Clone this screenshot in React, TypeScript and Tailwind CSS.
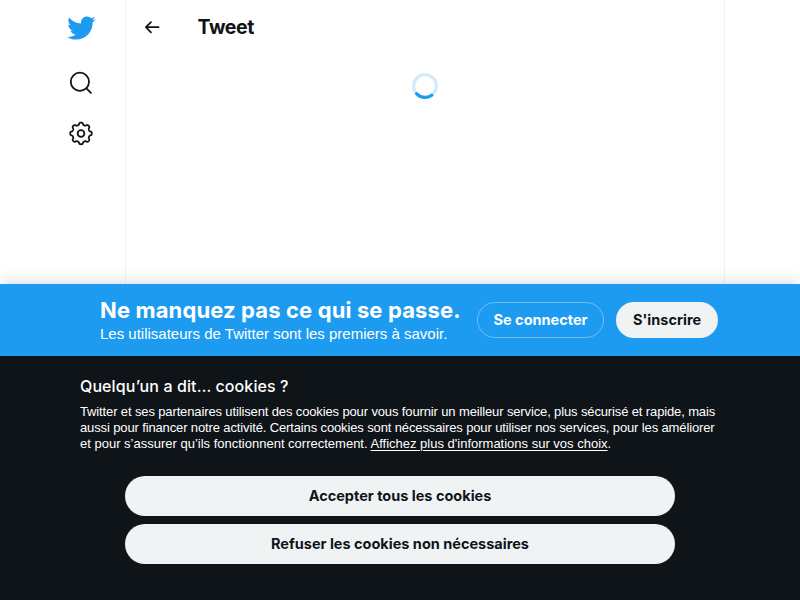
import React from "react";

const ink = "#0f1419";

function gearPath() {
  const points: string[] = [];
  for (let i = 0; i <= 144; i++) {
    const t = (i / 144) * Math.PI * 2;
    const wave = Math.cos(8 * t);
    const r = 9.0 + 1.0 * Math.tanh(1.7 * wave) / Math.tanh(1.7);
    points.push(`${(12 + r * Math.sin(t)).toFixed(2)} ${(12 - r * Math.cos(t)).toFixed(2)}`);
  }
  return `M${points.join("L")}Z`;
}

export default function App() {
  return (
    <div className="flex h-[600px] w-[800px] flex-col overflow-hidden bg-white font-['Inter','Liberation_Sans',sans-serif] text-[#0f1419]">
      <div className="flex h-[284px] shrink-0">
        <nav className="flex w-[125px] flex-col items-end pt-[13px] pr-[29px]">
          <svg viewBox="0 0 24 24" preserveAspectRatio="none" className="h-[30px] w-[30px]" fill="#1d9bf0">
            <path d="M23.643 4.937c-.835.37-1.732.62-2.675.733.962-.576 1.7-1.49 2.048-2.578-.9.534-1.897.922-2.958 1.13-.85-.904-2.06-1.47-3.4-1.47-2.572 0-4.658 2.086-4.658 4.66 0 .364.042.718.12 1.06-3.873-.195-7.304-2.05-9.602-4.868-.4.69-.63 1.49-.63 2.342 0 1.616.823 3.043 2.072 3.878-.764-.025-1.482-.234-2.11-.583v.06c0 2.257 1.605 4.14 3.737 4.568-.392.106-.803.162-1.227.162-.3 0-.593-.028-.877-.082.593 1.85 2.313 3.198 4.352 3.234-1.595 1.25-3.604 1.995-5.786 1.995-.376 0-.747-.022-1.112-.065 2.062 1.323 4.51 2.093 7.14 2.093 8.57 0 13.255-7.098 13.255-13.254 0-.2-.005-.402-.014-.602.91-.658 1.7-1.477 2.323-2.41z" />
          </svg>
          <svg viewBox="0 0 26 26" className="mt-[27px] mr-[2px] h-[26px] w-[26px]" fill="none" stroke={ink} strokeWidth="1.8" strokeLinecap="round">
            <circle cx="11.9" cy="11.8" r="9.1" />
            <path d="M18.4 18.3 22.9 22.8" />
          </svg>
          <svg viewBox="0 0 24 24" className="mt-[24px] mr-[2px] h-[26px] w-[26px]" fill="none" stroke={ink} strokeWidth="1.65" strokeLinejoin="round">
            <g transform="translate(0 0.4)">
              <path d={gearPath()} />
              <circle cx="12" cy="12" r="3.1" />
            </g>
          </svg>
        </nav>
        <main className="w-[600px] border-x border-[#eff3f4]">
          <header className="flex h-[53px] items-center pl-[16px]">
            <svg viewBox="0 0 20 20" className="h-5 w-5" fill="none" stroke={ink} strokeWidth="1.7" strokeLinecap="round" strokeLinejoin="round">
              <path d="M16.6 10.2H4.2M9 5.1 3.9 10.2 9 15.3" />
            </svg>
            <h1 className="ml-[35.5px] pt-px text-[19.5px] leading-6 font-bold tracking-[-0.4px]">Tweet</h1>
          </header>
          <div className="flex justify-center pt-[20px]">
            <svg viewBox="0 0 32 32" className="h-[26px] w-[26px]" fill="none" stroke="#1d9bf0" strokeWidth="4">
              <circle cx="16" cy="16" r="14" opacity="0.2" />
              <circle cx="16" cy="16" r="14" strokeDasharray="20 68" strokeLinecap="round" transform="rotate(54 16 16)" />
            </svg>
          </div>
        </main>
      </div>
      <section className="relative flex h-[72px] shrink-0 items-center bg-[#1d9bf0] pl-[100px] text-white shadow-[0_0_15px_rgba(101,119,134,0.3)]">
        <div className="w-[377px] whitespace-nowrap">
          <p className="pt-px text-[22px] leading-[27px] font-bold tracking-[0.13px]">Ne manquez pas ce qui se passe.</p>
          <p className="font-['Liberation_Sans',sans-serif] text-[15px] leading-5">Les utilisateurs de Twitter sont les premiers à savoir.</p>
        </div>
        <button className="h-9 w-[127px] rounded-full border border-white/35 text-[14.5px] font-bold whitespace-nowrap">Se connecter</button>
        <button className="ml-3 h-9 w-[102px] rounded-full bg-[#eff3f4] text-[14.5px] font-bold whitespace-nowrap text-[#0f1419]">S'inscrire</button>
      </section>
      <section className="relative flex flex-1 flex-col bg-[#0f1419] px-20 pt-5 text-white">
        <h2 className="pt-px text-[16px] leading-[19px] font-medium tracking-[0.1px] whitespace-nowrap">Quelqu’un a dit… cookies ?</h2>
        <div className="mt-2 font-['Liberation_Sans',sans-serif] text-[13px] leading-4 whitespace-nowrap">
          <p className="tracking-[-0.13px]">Twitter et ses partenaires utilisent des cookies pour vous fournir un meilleur service, plus sécurisé et rapide, mais</p>
          <p className="tracking-[-0.13px]">aussi pour financer notre activité. Certains cookies sont nécessaires pour utiliser nos services, pour les améliorer</p>
          <p>et pour s’assurer qu’ils fonctionnent correctement. <a className="underline underline-offset-2">Affichez plus d'informations sur vos choix</a>.</p>
        </div>
        <div className="mt-6 flex flex-col items-center gap-2 text-[14.5px] font-bold text-[#0f1419]">
          <button className="h-10 w-[550px] rounded-full bg-[#eff3f4]">Accepter tous les cookies</button>
          <button className="h-10 w-[550px] rounded-full bg-[#eff3f4]">Refuser les cookies non nécessaires</button>
        </div>
      </section>
    </div>
  );
}
